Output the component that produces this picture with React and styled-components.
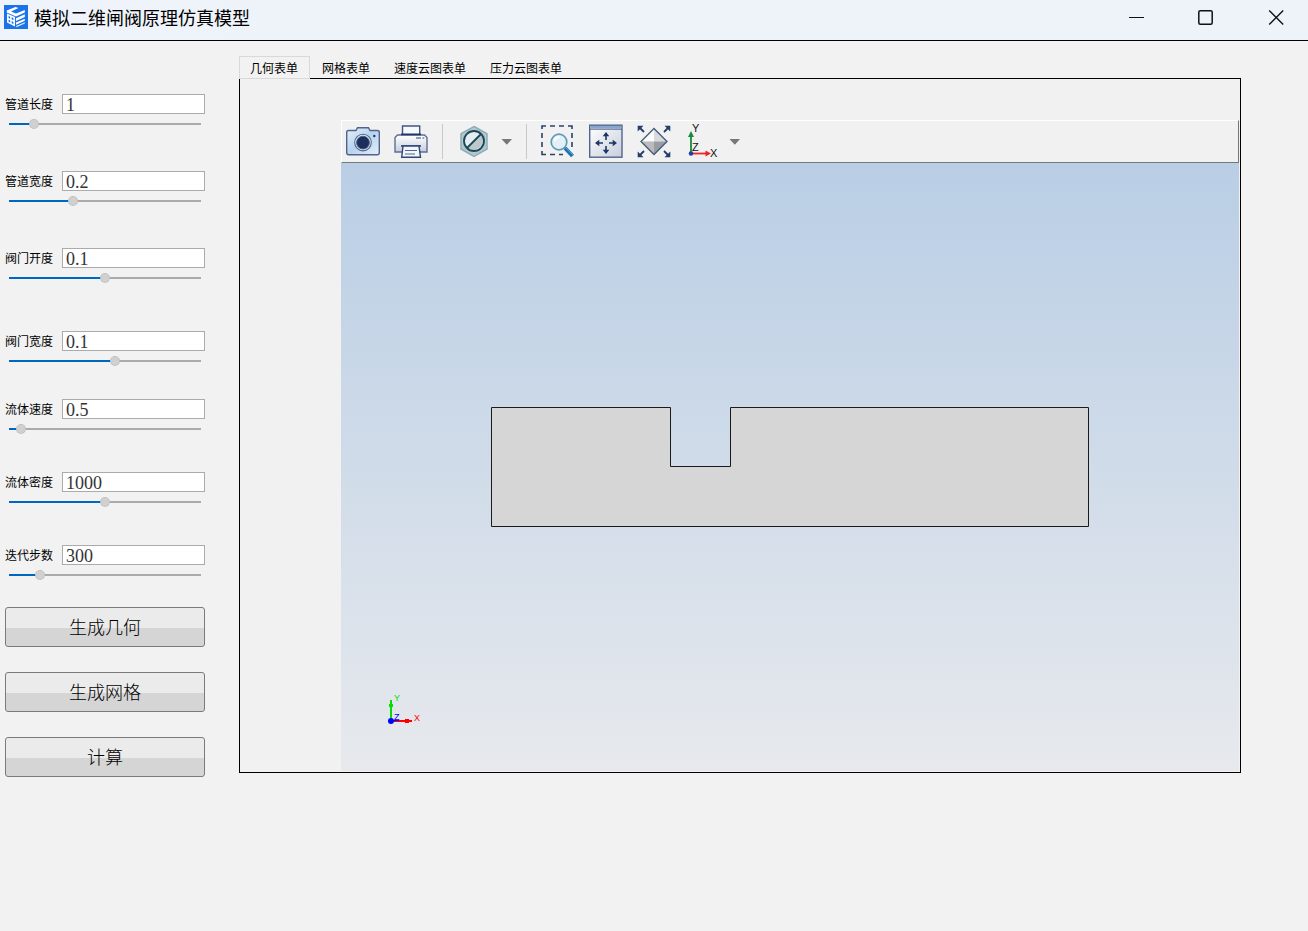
import React from "react";
import { useState } from "react";
// STYLED
import styled, { createGlobalStyle } from "styled-components";

// PARAMETERS
const PARAMS = [
  { id: "pipeLength", label: "管道长度", value: "1", min: 0.5, max: 5, gap: 41 },
  { id: "pipeWidth", label: "管道宽度", value: "0.2", min: 0.01, max: 0.6, gap: 41 },
  { id: "valveOpening", label: "阀门开度", value: "0.1", min: 0, max: 0.2, gap: 47 },
  { id: "valveWidth", label: "阀门宽度", value: "0.1", min: 0, max: 0.18, gap: 32 },
  { id: "velocity", label: "流体速度", value: "0.5", min: 0.1, max: 10, gap: 37 },
  { id: "density", label: "流体密度", value: "1000", min: 0, max: 2000, gap: 37 },
  { id: "steps", label: "迭代步数", value: "300", min: 20, max: 2000, gap: 26 },
];

const TABS = ["几何表单", "网格表单", "速度云图表单", "压力云图表单"];

const ACTIONS = ["生成几何", "生成网格", "计算"];

// ICONS
const LogoIcon = () => (
  <svg width="24" height="24" viewBox="0 0 24 24" aria-hidden="true">
    <rect width="24" height="24" fill="#1a73e8" />
    <path d="M2.8 5.6 11.5 2 14.5 3.1 7 6.5 12 8.6 20.8 4.9V7.6L12 11.4 2.8 7.4Z" fill="#fff" />
    <path d="M3 8.6 11 12V21.6L3 17.6ZM4.6 11V13L6.2 13.7V11.7ZM7.7 12.3V14.4L9.4 15.1V13ZM4.6 14.7V16.7L6.2 17.5V15.4ZM7.7 16.1V18.2L9.4 19V16.9Z" fill="#fff" fillRule="evenodd" />
    <path d="M12 13.2 20.8 9.3V12L12 15.9ZM12 17.6 20.8 13.7V15.8L12 19.7Z" fill="#fff" />
    <path d="M12 21 20.8 17.2V18.6L12.6 22.3Z" fill="#dbe9fc" />
  </svg>
);

const CameraIcon = () => (
  <svg width="36" height="36" viewBox="0 0 36 36" aria-hidden="true">
    <defs>
      <linearGradient id="cameraBody" x1="0" y1="0" x2="1" y2="1">
        <stop offset="0" stopColor="#e6f0fa" />
        <stop offset="0.5" stopColor="#b7d3ee" />
        <stop offset="1" stopColor="#e6f0fb" />
      </linearGradient>
    </defs>
    <path d="M3.5 6.5H11L12.5 3.7H23.5L25 6.5H32.5Q34.3 6.5 34.3 8.5V28.5Q34.3 30.7 32.3 30.7H3.8Q1.7 30.7 1.7 28.5V8.5Q1.7 6.5 3.5 6.5Z" fill="url(#cameraBody)" stroke="#50648c" strokeWidth="1.4" />
    <circle cx="18" cy="18.6" r="8.3" fill="#dfeaf6" stroke="#52658c" strokeWidth="1.1" />
    <circle cx="18" cy="18.6" r="6.4" fill="#1c2f5c" stroke="#4a5f88" strokeWidth="1" />
    <circle cx="29.3" cy="12" r="1.3" fill="#2c4270" />
  </svg>
);

const PrinterIcon = () => (
  <svg width="36" height="36" viewBox="0 0 36 36" aria-hidden="true">
    <defs>
      <linearGradient id="printerBody" x1="0" y1="0" x2="0" y2="1">
        <stop offset="0" stopColor="#fff" />
        <stop offset="1" stopColor="#c5cddb" />
      </linearGradient>
    </defs>
    <path d="M9.5 2H26.7V12H9.5Z" fill="#f5f8fc" stroke="#42557f" strokeWidth="1.4" />
    <path d="M4.5 11H31.5L34 13.5V28H2V13.5Z" fill="url(#printerBody)" stroke="#5e6f93" strokeWidth="1.4" />
    <path d="M8 10.3H28M8 22H28" stroke="#1f3767" strokeWidth="1.7" />
    <path d="M23 14H28M29.5 14H31.3" stroke="#30466f" strokeWidth="1.2" />
    <path d="M10 22H26L27.5 33.3H8.7Z" fill="#f2f6fc" stroke="#304775" strokeWidth="1.4" />
    <path d="M12 26.5H24M12 30H22" stroke="#536790" strokeWidth="1.2" />
  </svg>
);

const HexagonIcon = () => (
  <svg width="36" height="36" viewBox="0 0 36 36" aria-hidden="true">
    <path d="M18 2.5 31 9.7V25L18 32.3 5 25V9.7Z" fill="#b8c9d0" stroke="#8dacb8" strokeWidth="1.5" />
    <path d="M18 5.5 28.3 11.2V23.6L18 29.3 7.7 23.6V11.2Z" fill="#cbdadf" stroke="#a8bec6" strokeWidth="1" />
    <circle cx="18" cy="17" r="10" fill="#e7edf0" />
    <path d="M25 10A10 10 0 0 1 11 24Z" fill="#bdc7cc" />
    <circle cx="18" cy="17" r="10" fill="none" stroke="#174959" strokeWidth="1.8" />
    <path d="M25 10 11 24" stroke="#174959" strokeWidth="1.8" />
  </svg>
);

const ZoomBoxIcon = () => (
  <svg width="36" height="36" viewBox="0 0 36 36" aria-hidden="true">
    <path d="M2 5V2H6M10 2H15M19 2H24M28 2H32V5M2 9V14M2 18V23M2 27V30.5H6M10 30.5H15M19 30.5H23M32 9V14M32 18V23" fill="none" stroke="#29416f" strokeWidth="1.6" />
    <circle cx="19" cy="18" r="7.8" fill="#e4f0f7" stroke="#5b9bbc" strokeWidth="1.7" />
    <path d="M14.5 17A5 5 0 0 1 19.5 13" fill="none" stroke="#fff" strokeWidth="2" />
    <path d="M25 24 32.5 32" stroke="#1c73b5" strokeWidth="4" />
    <path d="M25 23 33 30.8" stroke="#55a5d8" strokeWidth="1" />
  </svg>
);

const FitIcon = () => (
  <svg width="36" height="36" viewBox="0 0 36 36" aria-hidden="true">
    <defs>
      <linearGradient id="fitBody" x1="0" y1="0" x2="1" y2="1">
        <stop offset="0" stopColor="#fff" />
        <stop offset="1" stopColor="#c7cfdc" />
      </linearGradient>
    </defs>
    <rect x="1.7" y="1.2" width="32.3" height="32" fill="url(#fitBody)" stroke="#50648d" strokeWidth="1.4" />
    <path d="M2.4 2H33.3V4.5H2.4Z" fill="#86a6ce" />
    <path d="M2 5.2H34" stroke="#50648d" strokeWidth="1" />
    <path d="M18 11V16M18 22V27.5M9 19H15M21 19H27" stroke="#1d3765" strokeWidth="1.6" />
    <path d="M18 8 21.3 12.3H14.7ZM18 30 21.3 25.7H14.7ZM7 19 11.3 15.7V22.3ZM29 19 24.7 15.7V22.3Z" fill="#1d3765" />
  </svg>
);

const DiamondIcon = () => (
  <svg width="36" height="36" viewBox="0 0 36 36" aria-hidden="true">
    <path d="M18 4.5 31 17.5H18Z" fill="#d7d9dc" />
    <path d="M18 4.5 5 17.5H18Z" fill="#fafafa" />
    <path d="M5 17.5H18V30.5Z" fill="#b9bbbe" />
    <path d="M31 17.5H18V30.5Z" fill="#999ca0" />
    <path d="M18 4.5 31 17.5 18 30.5 5 17.5Z" fill="none" stroke="#455b77" strokeWidth="1.3" />
    <path d="M3 3 8 8M33 3 28 8M3 32 8 27M33 32 28 27" stroke="#233d6c" strokeWidth="1.8" />
    <path d="M1.7 1.7H7.5L1.7 7.5ZM34.3 1.7H28.5L34.3 7.5ZM1.7 33.3V27.5L7.5 33.3ZM34.3 33.3V27.5L28.5 33.3Z" fill="#233d6c" />
  </svg>
);

const AxesIcon = () => (
  <svg width="36" height="40" viewBox="0 0 36 40" aria-hidden="true">
    <path d="M7 32V13" stroke="#168b3c" strokeWidth="1.8" />
    <path d="M7 9 10 15H4Z" fill="#168b3c" />
    <path d="M7 31.5H22" stroke="#ee2525" strokeWidth="1.8" />
    <path d="M27 31.5 21.5 28.5V34.5Z" fill="#ee2525" />
    <circle cx="7" cy="31.5" r="2.3" fill="#2340a9" />
    <AxisLabel x="8" y="10">Y</AxisLabel>
    <AxisLabel x="8" y="29">Z</AxisLabel>
    <AxisLabel x="26" y="35">X</AxisLabel>
  </svg>
);

const ArrowIcon = () => (
  <svg width="12" height="6" viewBox="0 0 12 6" aria-hidden="true">
    <path d="M0.5 0H11L5.8 5.7Z" fill="#777" />
  </svg>
);

// WINDOW HEADER
function TitleBar() {
  return (
    <Header>
      <LogoIcon />
      <Title>模拟二维闸阀原理仿真模型</Title>
      <WindowButtons>
        <WindowButton aria-label="最小化">
          <svg width="16" height="16" viewBox="0 0 16 16">
            <path d="M1 8.5H16" stroke="#111" />
          </svg>
        </WindowButton>
        <WindowButton aria-label="最大化">
          <svg width="16" height="16" viewBox="0 0 16 16">
            <rect x="0.8" y="1.8" width="13.4" height="13.4" rx="1.5" fill="none" stroke="#111" strokeWidth="1.5" />
          </svg>
        </WindowButton>
        <WindowButton aria-label="关闭">
          <svg width="16" height="16" viewBox="0 0 16 16">
            <path d="M1.2 1.5 15.2 15.5M15.2 1.5 1.2 15.5" stroke="#111" strokeWidth="1.4" />
          </svg>
        </WindowButton>
      </WindowButtons>
    </Header>
  );
}

// FIELD WITH SLIDER
function ParamField({ param, value, onChange }) {
  const ratio = (Number(value) - param.min) / (param.max - param.min);
  const percent = Math.min(100, Math.max(0, ratio * 100));

  return (
    <Field $gap={param.gap}>
      <FieldRow>
        <Label htmlFor={param.id}>{param.label}</Label>
        <TextBox
          id={param.id}
          type="text"
          value={value}
          onChange={(e) => onChange(e.target.value)}
        />
      </FieldRow>
      <Slider
        type="range"
        aria-label={param.label}
        min={param.min}
        max={param.max}
        step="any"
        value={Number(value) || 0}
        style={{ "--fill": `${percent}%` }}
        onChange={(e) => onChange(String(Number(Number(e.target.value).toPrecision(3))))}
      />
    </Field>
  );
}

// GRAPHICS TOOLBAR
function GraphicsToolbar() {
  return (
    <Toolbar>
      <ToolButton aria-label="截图">
        <CameraIcon />
      </ToolButton>
      <ToolButton aria-label="打印">
        <PrinterIcon />
      </ToolButton>
      <Separator />
      <ToolGroup>
        <ToolButton aria-label="选择">
          <HexagonIcon />
        </ToolButton>
        <ArrowButton aria-label="选择选项">
          <ArrowIcon />
        </ArrowButton>
      </ToolGroup>
      <Separator />
      <ToolButton aria-label="框选缩放">
        <ZoomBoxIcon />
      </ToolButton>
      <ToolButton aria-label="缩放至窗口">
        <FitIcon />
      </ToolButton>
      <ToolButton aria-label="缩放至全部">
        <DiamondIcon />
      </ToolButton>
      <ToolGroup>
        <ToolButton aria-label="视图方向">
          <AxesIcon />
        </ToolButton>
        <ArrowButton aria-label="视图方向选项">
          <ArrowIcon />
        </ArrowButton>
      </ToolGroup>
    </Toolbar>
  );
}

// GEOMETRY
function GeometryView() {
  return (
    <Canvas viewBox="0 0 898 608" role="img" aria-label="几何">
      <path
        d="M150.5 244.5H329.5V303.5H389.5V244.5H747.5V363.5H150.5Z"
        fill="#d6d6d6"
        stroke="#1a1a1a"
        strokeWidth="1"
      />
      {/* axes */}
      <path d="M50 557V537" stroke="#00e000" strokeWidth="2" />
      <path d="M48 541H52V544H48Z" fill="#00e000" />
      <path d="M51 558H71" stroke="#f00" strokeWidth="2" />
      <path d="M64 556H68V560H64Z" fill="#f00" />
      <path d="M53 557.5H58" stroke="#00f" strokeWidth="1" />
      <circle cx="50" cy="558" r="3" fill="#00f" />
      <TriadLabel x="53" y="538" fill="#00e000">Y</TriadLabel>
      <TriadLabel x="53" y="557" fill="#00f">Z</TriadLabel>
      <TriadLabel x="73" y="558" fill="#f00">X</TriadLabel>
    </Canvas>
  );
}

function App() {
  const [values, setValues] = useState(() =>
    Object.fromEntries(PARAMS.map((param) => [param.id, param.value]))
  );
  const [activeTab, setActiveTab] = useState(0);

  const handleChange = (id, value) => {
    setValues({ ...values, [id]: value });
  };

  return (
    <>
      <GlobalStyle />
      <TitleBar />
      <Main>
        <Sidebar>
          {PARAMS.map((param) => (
            <ParamField
              key={param.id}
              param={param}
              value={values[param.id]}
              onChange={(value) => handleChange(param.id, value)}
            />
          ))}
          <Actions>
            {ACTIONS.map((action) => (
              <ActionButton key={action} type="button">
                {action}
              </ActionButton>
            ))}
          </Actions>
        </Sidebar>
        <Content>
          <TabList role="tablist">
            {TABS.map((tab, index) => (
              <Tab
                key={tab}
                role="tab"
                aria-selected={index === activeTab}
                $active={index === activeTab}
                onClick={() => setActiveTab(index)}
              >
                {tab}
              </Tab>
            ))}
          </TabList>
          <TabPanel role="tabpanel">
            <GraphicsToolbar />
            <GeometryView />
          </TabPanel>
        </Content>
      </Main>
    </>
  );
}

export default App;

const GlobalStyle = createGlobalStyle`
  * {
    box-sizing: border-box;
  }
  body {
    margin: 0;
    background-color: #f2f2f2;
    color: #000;
    font-family: "Noto Sans CJK SC", sans-serif;
    font-size: 12px;
  }
  button, input {
    margin: 0;
    font-family: inherit;
    color: inherit;
  }
`;

const Header = styled.header`
  display: flex;
  align-items: center;
  gap: 6px;
  padding: 0 0 6px 4px;
  height: 41px;
  background: linear-gradient(to right, #eff3fb, #edf3f8 50%);
  border-bottom: 1px solid #000;
`;

const Title = styled.h1`
  flex: 1;
  margin: 0;
  font-size: 18px;
  font-weight: 400;
  line-height: 24px;
`;

const WindowButtons = styled.div`
  display: flex;
  gap: 6px;
`;

const WindowButton = styled.button`
  display: flex;
  align-items: center;
  justify-content: center;
  width: 64px;
  height: 34px;
  padding: 0;
  border: none;
  background: none;
`;

const Main = styled.main`
  display: flex;
  align-items: flex-start;
  gap: 34px;
  padding: 15px 67px 15px 5px;
`;

const Sidebar = styled.aside`
  flex: none;
  width: 200px;
  padding-top: 38px;
`;

const Field = styled.div`
  margin-bottom: ${(props) => props.$gap}px;
`;

const FieldRow = styled.div`
  display: flex;
  align-items: center;
`;

const Label = styled.label`
  width: 57px;
  font-size: 12px;
  line-height: 20px;
`;

const TextBox = styled.input`
  flex: 1;
  min-width: 0;
  height: 20px;
  padding: 2px 3px 0;
  border: 1px solid #ababab;
  background-color: #fff;
  font-family: "Liberation Serif", "Noto Sans CJK SC", serif;
  font-size: 18px;
  line-height: 16px;
  color: #333;
  outline: none;
`;

const Slider = styled.input`
  display: block;
  appearance: none;
  width: 192px;
  height: 12px;
  margin: 4px 4px 0;
  background: linear-gradient(#0067c0, #0067c0) left center / var(--fill) 2px no-repeat,
    linear-gradient(#ababab, #ababab) left center / 100% 2px no-repeat;

  &::-webkit-slider-thumb {
    appearance: none;
    width: 10px;
    height: 10px;
    border: 1px dotted #b4b4b4;
    border-radius: 50%;
    background-color: #d0d0d0;
  }
`;

const Actions = styled.div`
  display: flex;
  flex-direction: column;
  gap: 25px;
`;

const ActionButton = styled.button`
  height: 40px;
  padding: 0 0 3px;
  border: 1px solid #7a7a7a;
  border-radius: 3px;
  background: linear-gradient(#ebebeb 0 20px, #d5d5d5 20px);
  font-size: 18px;
  font-weight: 300;
  line-height: 24px;
`;

const Content = styled.section`
  flex: 1;
  min-width: 0;
`;

const TabList = styled.div`
  position: relative;
  display: flex;
  gap: 1px;
  margin-bottom: -1px;
`;

const Tab = styled.button`
  height: 23px;
  padding: 0 11px 0 10px;
  border: 1px solid ${(props) => (props.$active ? "#d9d9d9" : "transparent")};
  background-color: ${(props) => (props.$active ? "#f2f2f2" : "transparent")};
  font-size: 12px;
  line-height: 20px;
`;

const TabPanel = styled.div`
  padding: 41px 1px 1px 101px;
  border: 1px solid #000;
  background-color: #f1f1f1;
`;

const Toolbar = styled.div`
  display: flex;
  align-items: center;
  gap: 12px;
  height: 43px;
  padding-left: 3px;
  border-top: 1px solid #fff;
  border-left: 1px solid #fff;
  border-right: 1px solid #777;
  border-bottom: 1px solid #777;
`;

const ToolGroup = styled.div`
  display: flex;
  align-items: center;
  gap: 9px;
`;

const ToolButton = styled.button`
  display: flex;
  flex: none;
  align-items: center;
  width: 36px;
  height: 40px;
  padding: 0;
  border: none;
  background: none;
`;

const ArrowButton = styled.button`
  display: flex;
  align-items: center;
  width: 12px;
  height: 40px;
  padding: 0;
  border: none;
  background: none;
`;

const Separator = styled.span`
  width: 1px;
  height: 35px;
  margin: 0 1px;
  background-color: #c8c8c8;
`;

const Canvas = styled.svg`
  display: block;
  width: 100%;
  height: auto;
  background: linear-gradient(#b9cee5, #e7e9ed);
`;

const AxisLabel = styled.text`
  font-family: "Liberation Sans", sans-serif;
  font-size: 11px;
  fill: #111;
`;

const TriadLabel = styled.text`
  font-family: "Liberation Sans", sans-serif;
  font-size: 9px;
`;
